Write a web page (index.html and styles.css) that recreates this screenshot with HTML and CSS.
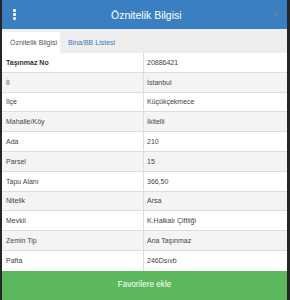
FILE: index.html
```html
<!DOCTYPE html>
<html lang="tr">
<head>
<meta charset="utf-8">
<link rel="stylesheet" href="styles.css">
</head>
<body>
<div class="modal">
  <div class="header">
    <span class="kebab"><i></i><i></i><i></i></span>
    <h1 class="title">Öznitelik Bilgisi</h1>
    <span class="close">×</span>
  </div>
  <div class="tabs">
    <span class="tab active">Öznitelik Bilgisi</span>
    <span class="tab link">Bina/BB Listesi</span>
  </div>
  <div class="table">
    <div class="row head"><div class="cell key">Taşınmaz No</div><div class="cell val">20886421</div></div>
    <div class="row odd"><div class="cell key">İl</div><div class="cell val">İstanbul</div></div>
    <div class="row"><div class="cell key">İlçe</div><div class="cell val">Küçükçekmece</div></div>
    <div class="row odd"><div class="cell key">Mahalle/Köy</div><div class="cell val">İkitelli</div></div>
    <div class="row"><div class="cell key">Ada</div><div class="cell val">210</div></div>
    <div class="row odd"><div class="cell key">Parsel</div><div class="cell val">15</div></div>
    <div class="row"><div class="cell key">Tapu Alanı</div><div class="cell val">366,50</div></div>
    <div class="row odd"><div class="cell key">Nitelik</div><div class="cell val">Arsa</div></div>
    <div class="row"><div class="cell key">Mevkii</div><div class="cell val">K.Halkalı Çiftliği</div></div>
    <div class="row odd"><div class="cell key">Zemin Tip</div><div class="cell val">Ana Taşınmaz</div></div>
    <div class="row"><div class="cell key">Pafta</div><div class="cell val">246Dsıvb</div></div>
  </div>
  <div class="footer">Favorilere ekle</div>
</div>
</body>
</html>
```

FILE: styles.css
```css
html, body {
  margin: 0;
  padding: 0;
  background: #262626;
  height: 300px;
  overflow: hidden;
}
body {
  font-family: "Liberation Sans", Arial, sans-serif;
}
.modal {
  margin: 0 3px 0 2px;
  background: #fff;
  height: 300px;
  display: flex;
  flex-direction: column;
}
.header {
  height: 29px;
  background: #3b7fc3;
  display: flex;
  align-items: center;
  flex: none;
}
.kebab {
  display: flex;
  flex-direction: column;
  gap: 1.3px;
  margin-left: 11px;
  width: 3px;
}
.kebab i {
  display: block;
  width: 2.5px;
  height: 2.5px;
  background: #fff;
  border-radius: 50%;
}
.title {
  flex: 1;
  margin: 0;
  text-align: center;
  color: #fff;
  font-size: 10.5px;
  font-weight: normal;
  padding-left: 4px;
}
.close {
  color: #5b80a8;
  font-weight: bold;
  font-size: 11px;
  margin-right: 8px;
  line-height: 1;
}
.tabs {
  height: 24px;
  background: #eeeeee;
  display: flex;
  align-items: flex-end;
  flex: none;
}
.tab {
  height: 21px;
  display: flex;
  align-items: center;
  font-size: 7px;
  white-space: nowrap;
  box-sizing: border-box;
}
.tab.active {
  background: #fff;
  color: #555;
  width: 58px;
  padding-left: 8px;
}
.tab.link {
  color: #3a78b4;
  padding-left: 8px;
}
.table {
  flex: none;
}
.row {
  display: grid;
  grid-template-columns: 142px 1fr;
  height: 19.8px;
  box-sizing: border-box;
  border-bottom: 1px solid #dddddd;
  font-size: 7px;
  color: #444;
}
.row.odd {
  background: #f4f4f4;
}
.row:last-child {
  border-bottom: none;
}
.cell {
  display: flex;
  align-items: center;
  white-space: nowrap;
}
.key {
  padding-left: 4px;
  border-right: 1px solid #dddddd;
}
.val {
  padding-left: 3px;
}
.head .key {
  font-weight: bold;
  color: #333;
}
.footer {
  flex: 1;
  background: #5cb85c;
  color: #fff;
  font-size: 8.2px;
  display: flex;
  align-items: center;
  justify-content: center;
  padding-bottom: 1px;
}
```
